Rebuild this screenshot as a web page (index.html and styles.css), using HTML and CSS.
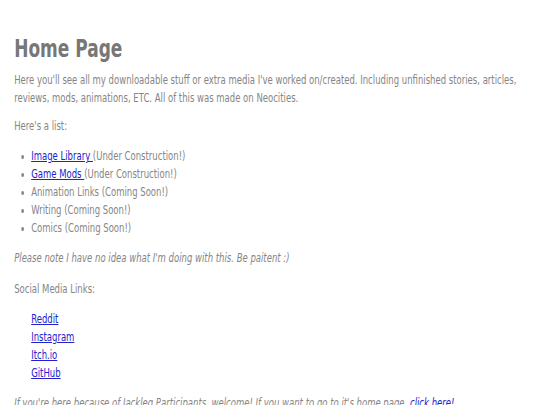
FILE: index.html
```html
<!DOCTYPE html>
<html>
<head>
<meta charset="utf-8">
<title>Home Page</title>
<link rel="stylesheet" href="styles.css">
</head>
<body>
<main class="page">
  <h1 class="title">Home Page</h1>
  <p class="intro">Here you'll see all my downloadable stuff or extra media I've worked on/created. Including unfinished stories, articles, reviews, mods, animations, ETC. All of this was made on Neocities.</p>
  <p>Here's a list:</p>
  <ul class="list">
    <li><a href="#">Image Library </a>(Under Construction!)</li>
    <li><a href="#">Game Mods </a>(Under Construction!)</li>
    <li>Animation Links (Coming Soon!)</li>
    <li>Writing (Coming Soon!)</li>
    <li>Comics (Coming Soon!)</li>
  </ul>
  <p class="note">Please note I have no idea what I'm doing with this. Be paitent :)</p>
  <p class="social-label">Social Media Links:</p>
  <ul class="social">
    <li><a href="#">Reddit</a></li>
    <li><a href="#">Instagram</a></li>
    <li><a href="#">Itch.io</a></li>
    <li><a href="#">GitHub</a></li>
  </ul>
  <p class="note">If you're here because of Jackleg Participants, welcome! If you want to go to it's home page, <a href="#">click here!</a></p>
</main>
</body>
</html>
```
FILE: styles.css
```css
html, body {
  margin: 0;
  padding: 0;
  background: #ffffff;
  overflow: hidden;
}
body {
  font-family: "DejaVu Sans", Verdana, sans-serif;
  font-size: 12px;
  line-height: 18px;
  color: #858585;
}
/* the page is drawn horizontally compressed */
.page {
  width: 763px;
  box-sizing: border-box;
  padding: 0 20px;
  transform: scaleX(0.708);
  transform-origin: 0 0;
}
.title {
  font-size: 24px;
  line-height: 30px;
  margin: 34px 0 7px;
  color: #777777;
  font-weight: bold;
}
p {
  margin: 0 0 12px;
}
.intro {
  margin-bottom: 10px;
}
.social-label {
  margin-top: 13px;
}
a {
  color: #2222cc;
}
.list {
  margin: 0 0 12px;
  padding-left: 24px;
}
.social {
  list-style: none;
  margin: 0 0 12px;
  padding-left: 24px;
}
.note {
  font-style: italic;
}
```
